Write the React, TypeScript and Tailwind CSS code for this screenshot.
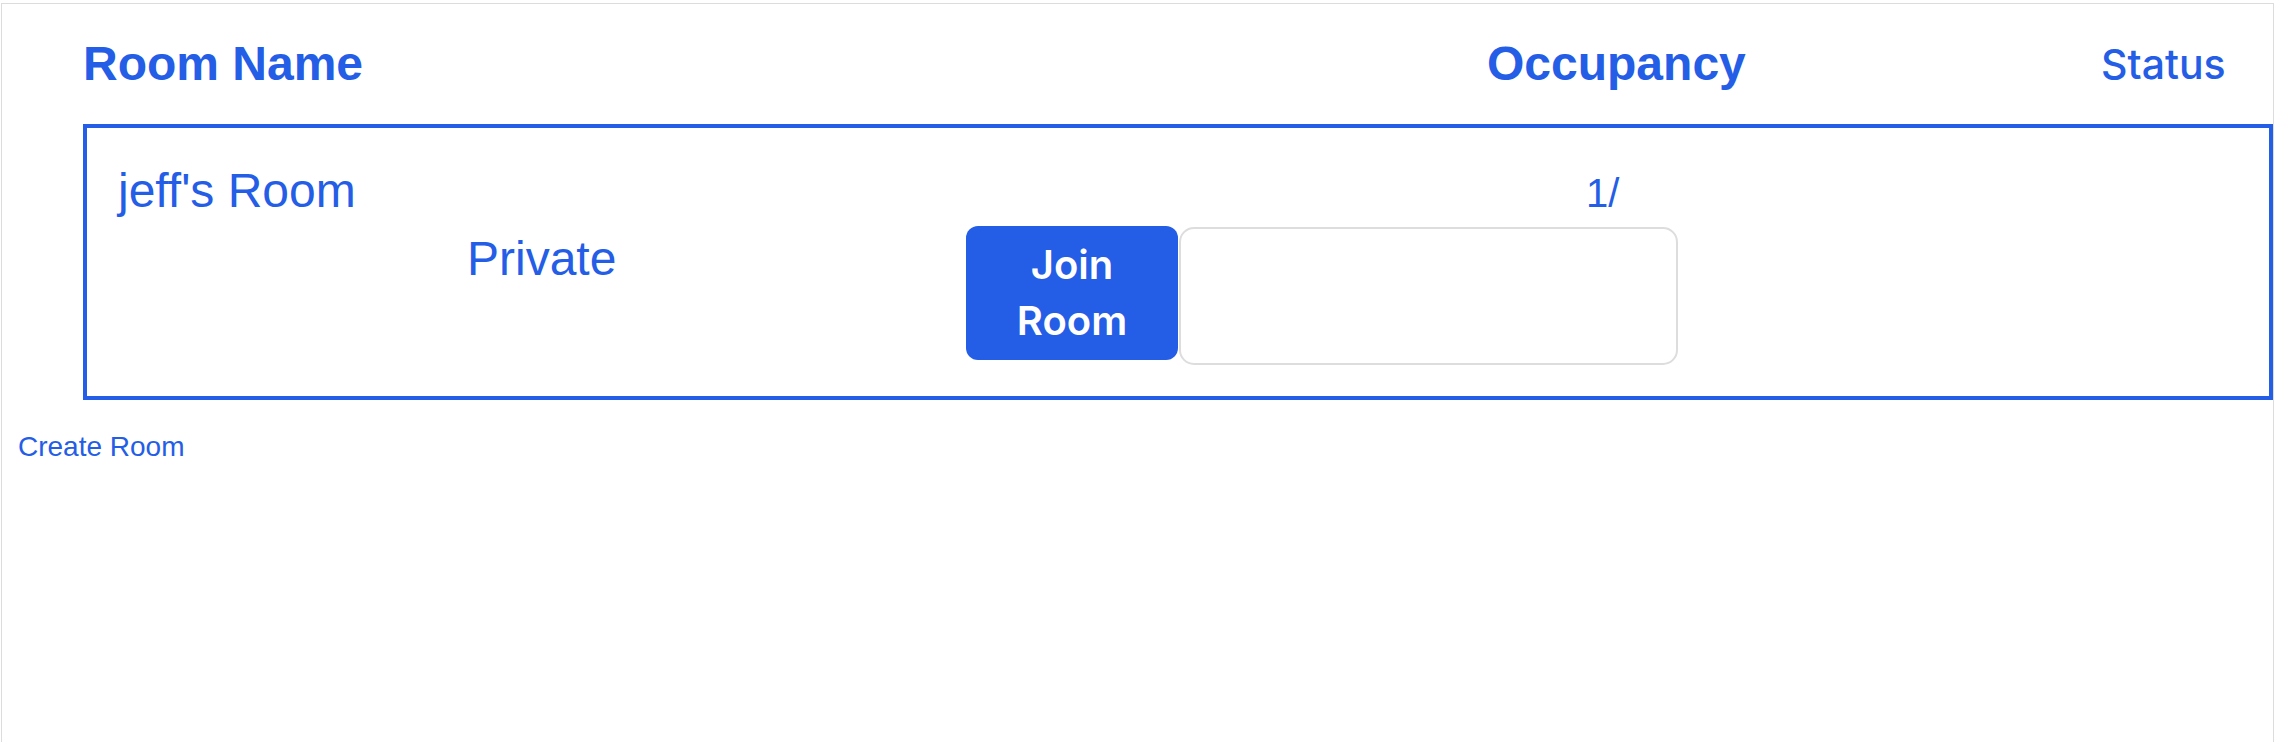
import React, { useState } from 'react';

const blue = 'text-[#245de6]';

interface Room {
  name: string;
  occupancy: string;
  isPrivate: boolean;
}

const rooms: Room[] = [{ name: "jeff's Room", occupancy: '1/', isPrivate: true }];

const RoomRow: React.FC<{ room: Room }> = ({ room }) => {
  const [code, setCode] = useState('');

  return (
    <div className="w-full h-[276px] border-[4px] border-[#245de6] pt-[35px] pl-[31px]">
      <div className="flex items-baseline h-[56px]">
        <div className={`w-[1468px] text-[48px] leading-[56px] ${blue}`}>{room.name}</div>
        <div className={`text-[40px] leading-[56px] ${blue}`}>{room.occupancy}</div>
      </div>
      <div className="flex items-start mt-[7px]">
        <div className={`w-[848px] pl-[349px] mt-[5px] text-[48px] leading-[56px] ${blue}`}>
          {room.isPrivate ? 'Private' : 'Public'}
        </div>
        <button
          className="w-[212px] h-[134px] rounded-[12px] bg-[#245de6] text-white text-[40px] leading-[56px] font-semibold px-[40px]"
          style={{ fontFamily: 'Inter, sans-serif' }}
        >
          Join Room
        </button>
        <input
          value={code}
          onChange={(e) => setCode(e.target.value)}
          className="ml-[1px] mt-[1px] w-[499px] h-[138px] rounded-[15px] border-2 border-[#dddddd] outline-none px-4 text-[32px]"
        />
      </div>
    </div>
  );
};

export default function App() {
  return (
    <div className="bg-white min-h-screen pt-[3px]" style={{ fontFamily: '"Liberation Sans", Arial, sans-serif' }}>
      <div className="ml-[1px] w-[2273px] h-[739px] border-t border-x border-[#dcdcdc]">
        <div className="pl-[81px]">
          <div className="flex items-start mt-[32px] h-[56px]">
            <div className={`w-[1404px] text-[48px] leading-[56px] font-bold ${blue}`}>Room Name</div>
            <div className={`w-[614px] text-[48px] leading-[56px] font-bold ${blue}`}>Occupancy</div>
            <div
              className={`text-[41px] leading-[56px] font-medium ${blue}`}
              style={{ fontFamily: 'Inter, sans-serif' }}
            >
              Status
            </div>
          </div>
          <div className="mt-[32px]">
            {rooms.map((r) => (
              <RoomRow key={r.name} room={r} />
            ))}
          </div>
        </div>
        <div className="pl-[16px] mt-[31px]">
          <a href="#" className={`text-[28px] leading-[32px] ${blue}`}>
            Create Room
          </a>
        </div>
      </div>
    </div>
  );
}
